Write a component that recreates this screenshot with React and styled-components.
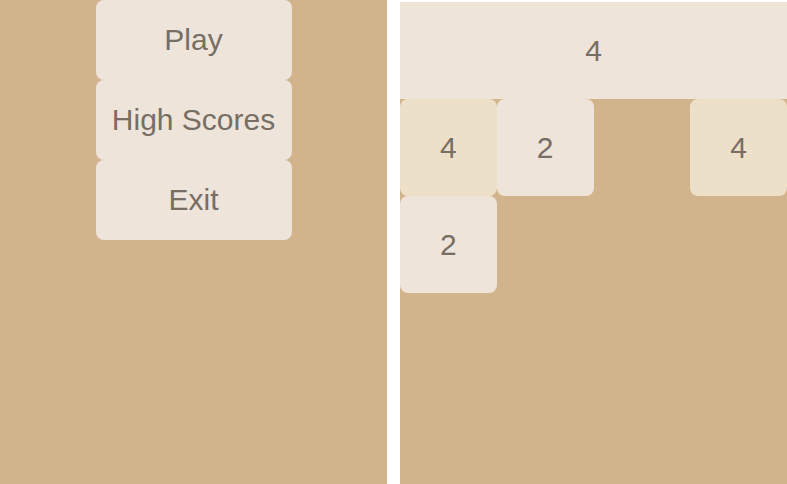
import React from "react";
import styled, { createGlobalStyle } from "styled-components";

const Global = createGlobalStyle`
  html, body { margin: 0; padding: 0; background: #ffffff; }
  body { font-family: "Liberation Sans", Arial, sans-serif; }
`;

const Page = styled.div`
  display: flex;
  gap: 13px;
  width: 787px;
  height: 484px;
  overflow: hidden;
`;

const MenuPanel = styled.div`
  width: 387px;
  height: 484px;
  background: #d2b48c;
  display: flex;
  flex-direction: column;
  align-items: center;
`;

const MenuButton = styled.div`
  width: 196px;
  height: 80px;
  border-radius: 8px;
  background: #eee4da;
  color: #776e65;
  font-size: 30px;
  display: flex;
  align-items: center;
  justify-content: center;
`;

const GamePanel = styled.div`
  width: 387px;
  margin-top: 2px;
  height: 482px;
  background: #d2b48c;
  display: flex;
  flex-direction: column;
`;

const ScoreBar = styled.div`
  height: 97px;
  background: #eee4da;
  color: #776e65;
  font-size: 30px;
  display: flex;
  align-items: center;
  justify-content: center;
`;

const Board = styled.div`
  display: grid;
  grid-template-columns: repeat(4, 1fr);
  grid-auto-rows: 97px;
`;

const Tile = styled.div`
  border-radius: 8px;
  background: ${(p) => (p.$value === 4 ? "#ede0c8" : p.$value === 2 ? "#eee4da" : "transparent")};
  color: #776e65;
  font-size: 30px;
  display: flex;
  align-items: center;
  justify-content: center;
`;

const cells = [4, 2, 0, 4, 2, 0, 0, 0];

export default function App() {
  return (
    <>
      <Global />
      <Page>
        <MenuPanel>
          <MenuButton>Play</MenuButton>
          <MenuButton>High Scores</MenuButton>
          <MenuButton>Exit</MenuButton>
        </MenuPanel>
        <GamePanel>
          <ScoreBar>4</ScoreBar>
          <Board>
            {cells.map((v, i) => (
              <Tile key={i} $value={v}>{v ? v : ""}</Tile>
            ))}
          </Board>
        </GamePanel>
      </Page>
    </>
  );
}
